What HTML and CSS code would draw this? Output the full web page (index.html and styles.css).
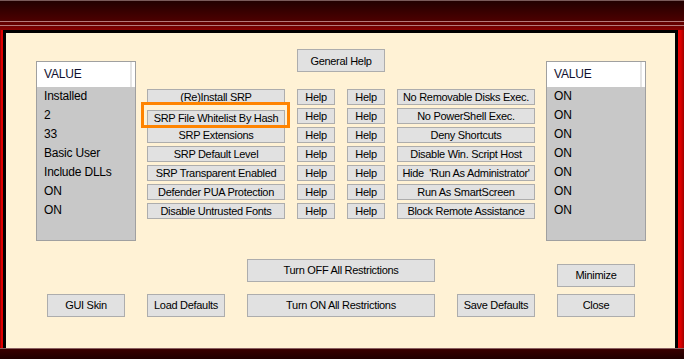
FILE: index.html
```html
<!DOCTYPE html>
<html lang="en">
<head>
    <meta charset="UTF-8">
    <meta name="viewport" content="width=device-width, initial-scale=1.0">
    <title>SRP Settings</title>
    <link rel="stylesheet" href="styles.css">
</head>
<body>
    <div class="window">
        <div class="titlebar"></div>
        <div class="frame">
            <div class="edge-left"></div>
            <div class="client">
                <div class="top">
                    <div class="listbox">
                        <div class="list-head"><span class="head-cell">VALUE</span></div>
                        <div class="list-item">Installed</div>
                        <div class="list-item">2</div>
                        <div class="list-item">33</div>
                        <div class="list-item">Basic User</div>
                        <div class="list-item">Include DLLs</div>
                        <div class="list-item">ON</div>
                        <div class="list-item">ON</div>
                    </div>

                    <div class="controls">
                        <button class="btn btn-general">General Help</button>

                        <button class="btn first">(Re)Install SRP</button>
                        <button class="btn">Help</button>
                        <button class="btn">Help</button>
                        <button class="btn">No Removable Disks Exec.</button>

                        <div class="marked first">
                            <button class="btn">SRP File Whitelist By Hash</button>
                            <span class="highlight"></span>
                        </div>
                        <button class="btn">Help</button>
                        <button class="btn">Help</button>
                        <button class="btn">No PowerShell Exec.</button>

                        <button class="btn first">SRP Extensions</button>
                        <button class="btn">Help</button>
                        <button class="btn">Help</button>
                        <button class="btn">Deny Shortcuts</button>

                        <button class="btn first">SRP Default Level</button>
                        <button class="btn">Help</button>
                        <button class="btn">Help</button>
                        <button class="btn">Disable Win. Script Host</button>

                        <button class="btn first">SRP Transparent Enabled</button>
                        <button class="btn">Help</button>
                        <button class="btn">Help</button>
                        <button class="btn">Hide&nbsp; 'Run As Administrator'</button>

                        <button class="btn first">Defender PUA Protection</button>
                        <button class="btn">Help</button>
                        <button class="btn">Help</button>
                        <button class="btn">Run As SmartScreen</button>

                        <button class="btn first">Disable Untrusted Fonts</button>
                        <button class="btn">Help</button>
                        <button class="btn">Help</button>
                        <button class="btn">Block Remote Assistance</button>
                    </div>

                    <div class="listbox">
                        <div class="list-head"><span class="head-cell">VALUE</span></div>
                        <div class="list-item">ON</div>
                        <div class="list-item">ON</div>
                        <div class="list-item">ON</div>
                        <div class="list-item">ON</div>
                        <div class="list-item">ON</div>
                        <div class="list-item">ON</div>
                        <div class="list-item">ON</div>
                    </div>
                </div>

                <div class="bottom">
                    <button class="btn btn-big btn-off">Turn OFF All Restrictions</button>
                    <button class="btn btn-big btn-minimize">Minimize</button>

                    <button class="btn btn-big">GUI Skin</button>
                    <button class="btn btn-big">Load Defaults</button>
                    <button class="btn btn-big">Turn ON All Restrictions</button>
                    <button class="btn btn-big">Save Defaults</button>
                    <button class="btn btn-big">Close</button>
                </div>
            </div>
            <div class="edge-right"></div>
        </div>
        <div class="bottombar"></div>
    </div>
</body>
</html>
```

FILE: styles.css
```css
body {
    margin: 0;
    padding: 0;
    font-family: "Liberation Sans", Arial, sans-serif;
    background-color: #2a0000;
    overflow: hidden;
}
.window {
    width: 684px;
    height: 359px;
    display: flex;
    flex-direction: column;
}
/* barra de titulo con lineas */
.titlebar {
    height: 30px;
    flex: none;
    background: linear-gradient(to bottom,
        #7a5a5a 0, #7a5a5a 1px,
        #220000 1px, #4c0000 21px,
        #b47a7a 21px, #b47a7a 22px,
        #650000 22px, #650000 25px,
        #b47a7a 25px, #b47a7a 26px,
        #6e0000 26px, #8a0000 30px);
}
.frame {
    display: flex;
    height: 318px;
    flex: none;
}
.edge-left {
    width: 3px;
    background: linear-gradient(to right, #9a0000 0, #9a0000 1px, #e00000 1px);
}
.edge-right {
    width: 6px;
    background: linear-gradient(to right, #f00000 0, #d80000 3px, #a00000 6px);
}
.client {
    width: 669px;
    height: 312px;
    border: 3px solid #000;
    background-color: #fff2d5;
    padding-top: 16px;
    box-sizing: content-box;
}
.client * {
    box-sizing: border-box;
}
.bottombar {
    flex: 1;
    background: linear-gradient(to bottom, #8a6060 0, #8a6060 1px, #3a0000 1px, #200000 100%);
}

/* listas de valores */
.top {
    display: flex;
    align-items: flex-start;
    gap: 11px;
    padding-left: 30px;
}
.listbox {
    width: 100px;
    height: 180px;
    margin-top: 12px;
    border: 1px solid #a0a0a0;
    background-color: #c8c8c8;
    font-size: 12px;
    letter-spacing: -0.2px;
    color: #000;
}
.list-head {
    height: 25px;
    background-color: #fff;
    display: flex;
}
.head-cell {
    width: 95px;
    padding-left: 7px;
    line-height: 25px;
    border-right: 2px solid #e4e4e4;
    color: #101030;
}
.list-item {
    height: 19px;
    line-height: 19px;
    padding-left: 7px;
}

/* botones */
.controls {
    display: grid;
    grid-template-columns: 138px 38px 38px 138px;
    grid-template-rows: 37px repeat(7, 16px);
    column-gap: 12px;
    row-gap: 3px;
}
.first {
    grid-column: 1;
}
.btn {
    font-family: inherit;
    font-size: 11px;
    letter-spacing: -0.3px;
    color: #000;
    background-color: #e1e1e1;
    border: 1px solid #adadad;
    padding: 0;
    margin: 0;
    height: 16px;
    line-height: 14px;
    white-space: nowrap;
    overflow: visible;
    cursor: pointer;
}
.btn:hover {
    background-color: #e5f1fb;
    border-color: #0078d7;
}
.btn-general {
    grid-column: 2 / 4;
    height: 23px;
    align-self: start;
}
.marked {
    position: relative;
}
.marked .btn {
    width: 100%;
}
.highlight {
    position: absolute;
    left: -6px;
    top: -6px;
    width: 149px;
    height: 26px;
    border: 3px solid #ff8400;
    pointer-events: none;
}
.bottom {
    display: grid;
    grid-template-columns: 78px 78px 188px 78px 78px;
    grid-template-rows: 28px 23px;
    column-gap: 22px;
    row-gap: 7px;
    margin-top: 18px;
    padding-left: 41px;
}
.btn-big {
    height: 23px;
    line-height: 21px;
}
.btn-off {
    grid-column: 3;
    align-self: start;
}
.btn-minimize {
    grid-column: 5;
    align-self: end;
}
```
